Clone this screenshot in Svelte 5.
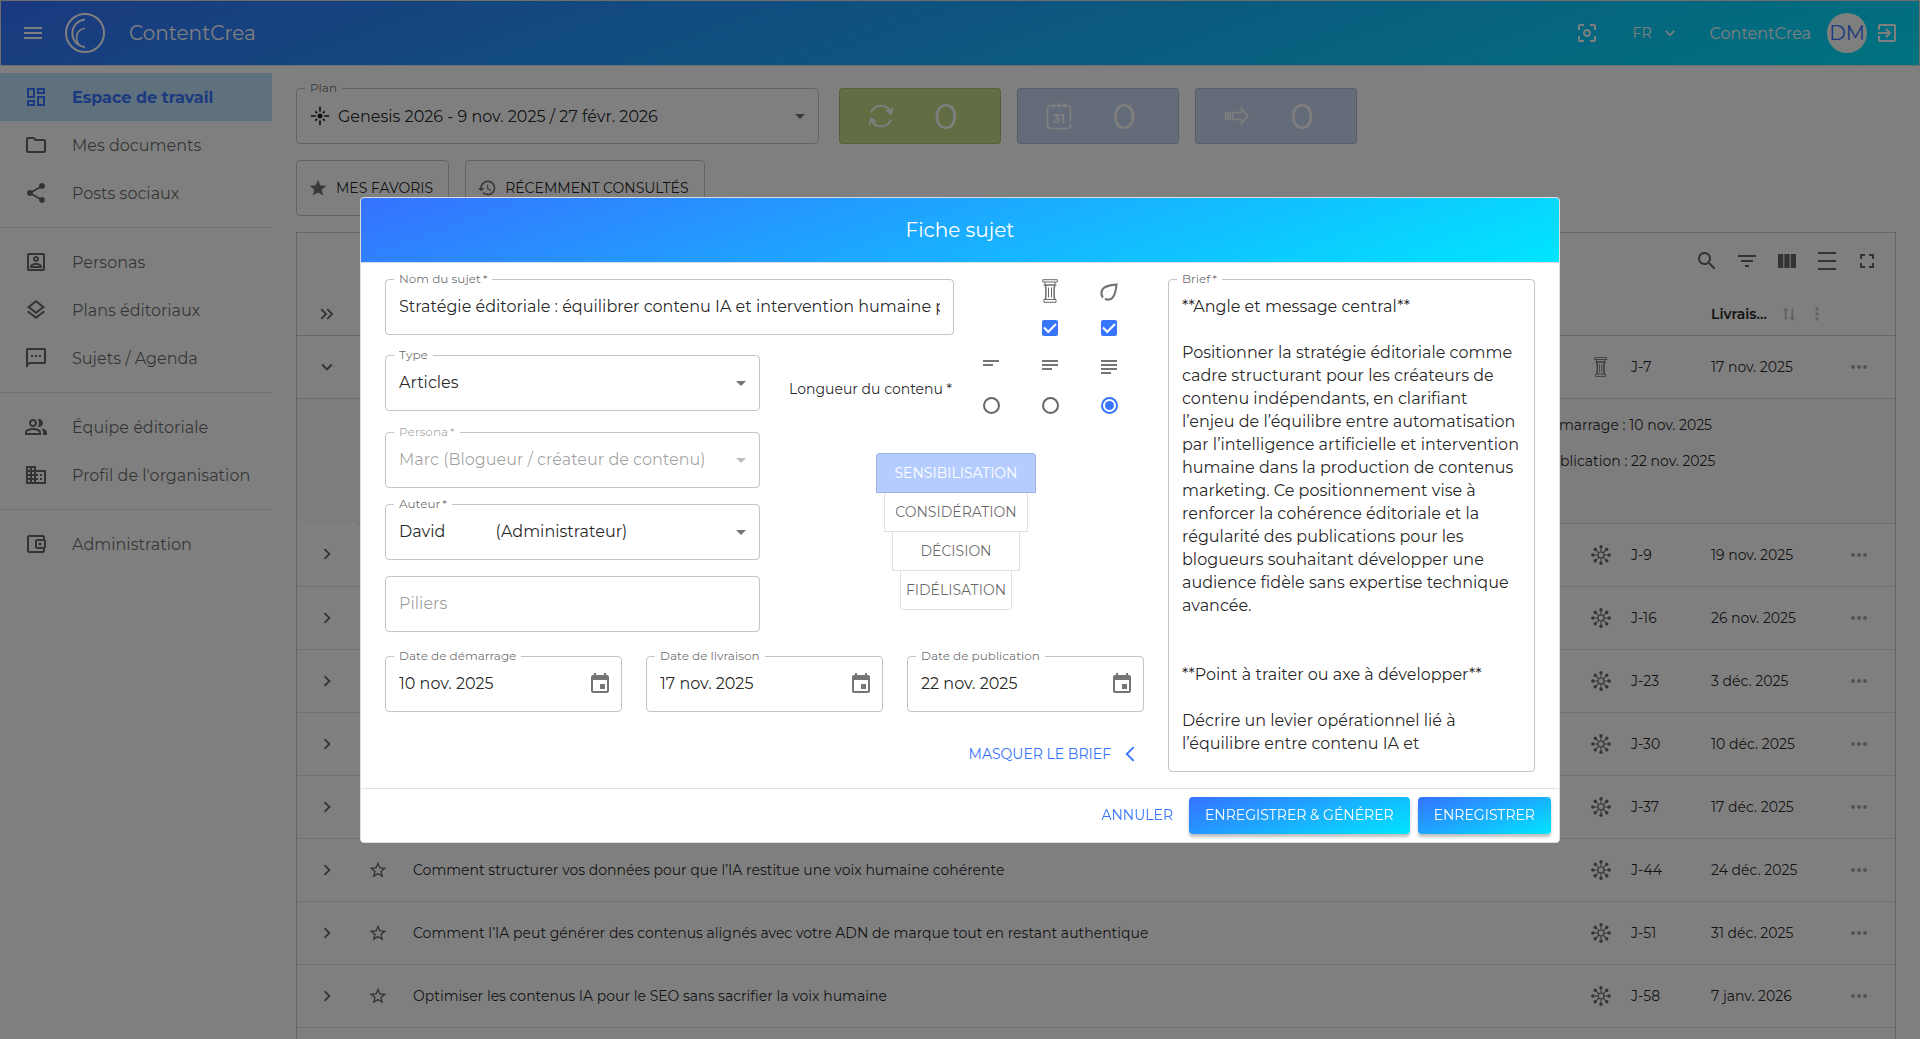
<script>
  const icons = {
    menu: "M3 18h18v-2H3v2zm0-5h18v-2H3v2zm0-7v2h18V6H3z",
    focus: "M5 15H3v4c0 1.1.9 2 2 2h4v-2H5v-4zM5 5h4V3H5c-1.1 0-2 .9-2 2v4h2V5zm14-2h-4v2h4v4h2V5c0-1.1-.9-2-2-2zm0 16h-4v2h4c1.1 0 2-.9 2-2v-4h-2v4zM12 8c-2.21 0-4 1.79-4 4s1.79 4 4 4 4-1.79 4-4-1.79-4-4-4zm0 6c-1.1 0-2-.9-2-2s.9-2 2-2 2 .9 2 2-.9 2-2 2z",
    down: "M16.59 8.59L12 13.17 7.41 8.59 6 10l6 6 6-6z",
    right: "M10 6L8.59 7.41 13.17 12l-4.58 4.59L10 18l6-6z",
    doubleRight: "M6.41 6L5 7.41 9.58 12 5 16.59 6.41 18l6-6zM13 6l-1.41 1.41L16.17 12l-4.58 4.59L13 18l6-6z",
    back: "M17.77 3.77L16 2 6 12l10 10 1.77-1.77L9.54 12z",
    dropDown: "M7 10l5 5 5-5z",
    exit: "M10.09 15.59L11.5 17l5-5-5-5-1.41 1.41L12.67 11H3v2h9.67l-2.58 2.59zM19 3H5c-1.11 0-2 .9-2 2v4h2V5h14v14H5v-4H3v4c0 1.1.89 2 2 2h14c1.1 0 2-.9 2-2V5c0-1.1-.9-2-2-2z",
    dashboard: "M19 5v2h-4V5h4M9 5v6H5V5h4m10 8v6h-4v-6h4M9 17v2H5v-2h4M21 3h-8v6h8V3zM11 3H3v10h8V3zm10 8h-8v10h8V11zm-10 4H3v6h8v-6z",
    folder: "M9.17 6l2 2H20v10H4V6h5.17M10 4H4c-1.1 0-1.99.9-1.99 2L2 18c0 1.1.9 2 2 2h16c1.1 0 2-.9 2-2V8c0-1.1-.9-2-2-2h-8l-2-2z",
    share: "M18 16.08c-.76 0-1.44.3-1.96.77L8.91 12.7c.05-.23.09-.46.09-.7s-.04-.47-.09-.7l7.05-4.11c.54.5 1.25.81 2.04.81 1.66 0 3-1.34 3-3s-1.34-3-3-3-3 1.34-3 3c0 .24.04.47.09.7L8.04 9.81C7.5 9.31 6.79 9 6 9c-1.66 0-3 1.34-3 3s1.34 3 3 3c.79 0 1.5-.31 2.04-.81l7.12 4.16c-.05.21-.08.43-.08.65 0 1.61 1.31 2.92 2.92 2.92 1.61 0 2.92-1.31 2.92-2.92s-1.31-2.92-2.92-2.92z",
    persona: "M19 5v14H5V5h14m0-2H5c-1.11 0-2 .9-2 2v14c0 1.1.89 2 2 2h14c1.1 0 2-.9 2-2V5c0-1.1-.9-2-2-2zm-7 9c-1.65 0-3-1.35-3-3s1.35-3 3-3 3 1.35 3 3-1.35 3-3 3zm0-4c-.55 0-1 .45-1 1s.45 1 1 1 1-.45 1-1-.45-1-1-1zm6 10H6v-1.53c0-2.5 3.97-3.58 6-3.58s6 1.08 6 3.58V18zm-9.69-2h7.38c-.69-.56-2.38-1.12-3.69-1.12s-3.01.56-3.69 1.12z",
    layers: "M11.99 18.54l-7.37-5.73L3 14.07l9 7 9-7-1.63-1.27-7.38 5.74zM12 16l7.36-5.73L21 9l-9-7-9 7 1.63 1.27L12 16zm0-11.47L17.74 9 12 13.47 6.26 9 12 4.53z",
    sms: "M20 2H4c-1.1 0-2 .9-2 2v18l4-4h14c1.1 0 2-.9 2-2V4c0-1.1-.9-2-2-2zm0 14H5.17L4 17.17V4h16v12zM7 9h2v2H7zm4 0h2v2h-2zm4 0h2v2h-2z",
    team: "M16.67 13.13C18.04 14.06 19 15.32 19 17v3h4v-3c0-2.18-3.57-3.47-6.33-3.87zM15 12c2.21 0 4-1.79 4-4s-1.79-4-4-4c-.47 0-.91.1-1.33.24C14.5 5.27 15 6.58 15 8s-.5 2.73-1.33 3.76c.42.14.86.24 1.33.24zM9 12c2.21 0 4-1.79 4-4s-1.79-4-4-4-4 1.79-4 4 1.79 4 4 4zm0-6c1.1 0 2 .9 2 2s-.9 2-2 2-2-.9-2-2 .9-2 2-2zm0 7c-2.67 0-8 1.34-8 4v3h16v-3c0-2.66-5.33-4-8-4zm6 5H3v-.99C3.2 16.29 6.3 15 9 15s5.8 1.29 6 2v1z",
    business: "M12 7V3H2v18h20V7H12zM6 19H4v-2h2v2zm0-4H4v-2h2v2zm0-4H4V9h2v2zm0-4H4V5h2v2zm4 12H8v-2h2v2zm0-4H8v-2h2v2zm0-4H8V9h2v2zm0-4H8V5h2v2zm10 12h-8v-2h2v-2h-2v-2h2v-2h-2V9h8v10zm-2-8h-2v2h2v-2zm0 4h-2v2h2v-2z",
    wallet: "M21 7.28V5c0-1.1-.9-2-2-2H5c-1.11 0-2 .9-2 2v14c0 1.1.89 2 2 2h14c1.1 0 2-.9 2-2v-2.28c.59-.35 1-.98 1-1.72V9c0-.74-.41-1.38-1-1.72zM20 9v6h-7V9h7zM5 19V5h14v2h-6c-1.1 0-2 .9-2 2v6c0 1.1.9 2 2 2h6v2H5zM16 10.5a1.5 1.5 0 1 0 0 3a1.5 1.5 0 1 0 0-3z",
    flare: "M7 11H1v2h6v-2zm2.17-3.24L7.05 5.64 5.64 7.05l2.12 2.12 1.41-1.41zM13 1h-2v6h2V1zm5.36 6.05l-1.41-1.41-2.12 2.12 1.41 1.41 2.12-2.12zM17 11v2h6v-2h-6zm-5-2c-1.66 0-3 1.34-3 3s1.34 3 3 3 3-1.34 3-3-1.34-3-3-3zm2.83 7.24l2.12 2.12 1.41-1.41-2.12-2.12-1.41 1.41zm-9.19.71l1.41 1.41 2.12-2.12-1.41-1.41-2.12 2.12zM11 23h2v-6h-2v6z",
    star: "M12 17.27L18.18 21l-1.64-7.03L22 9.24l-7.19-.61L12 2 9.19 8.63 2 9.24l5.46 4.73L5.82 21z",
    starBorder: "M22 9.24l-7.19-.62L12 2 9.19 8.63 2 9.24l5.46 4.73L5.82 21 12 17.27 18.18 21l-1.63-7.03L22 9.24zM12 15.4l-3.76 2.27 1-4.28-3.32-2.88 4.38-.38L12 6.1l1.71 4.04 4.38.38-3.32 2.88 1 4.28L12 15.4z",
    history: "M13 3c-4.97 0-9 4.03-9 9H1l3.89 3.89.07.14L9 12H6c0-3.87 3.13-7 7-7s7 3.13 7 7-3.13 7-7 7c-1.93 0-3.68-.79-4.94-2.06l-1.42 1.42C8.27 19.99 10.51 21 13 21c4.97 0 9-4.03 9-9s-4.03-9-9-9zm-1 5v5l4.28 2.54.72-1.21-3.5-2.08V8H12z",
    search: "M15.5 14h-.79l-.28-.27C15.41 12.59 16 11.11 16 9.5 16 5.91 13.09 3 9.5 3S3 5.91 3 9.5 5.91 16 9.5 16c1.61 0 3.09-.59 4.23-1.57l.27.28v.79l5 4.99L20.49 19l-4.99-5zm-6 0C7.01 14 5 11.99 5 9.5S7.01 5 9.5 5 14 7.01 14 9.5 11.99 14 9.5 14z",
    filter: "M10 18h4v-2h-4v2zM3 6v2h18V6H3zm3 7h12v-2H6v2z",
    columns: "M14.67 5v14H9.33V5h5.34zm1 14H21V5h-5.33v14zm-7.34 0V5H3v14h5.33z",
    density: "M3 3h18v2H3zM3 19h18v2H3zM3 11h18v2H3z",
    fullscreen: "M7 14H5v5h5v-2H7v-3zm-2-4h2V7h3V5H5v5zm12 7h-3v2h5v-5h-2v3zM14 5v2h3v3h2V5h-5z",
    more: "M6 10c-1.1 0-2 .9-2 2s.9 2 2 2 2-.9 2-2-.9-2-2-2zm12 0c-1.1 0-2 .9-2 2s.9 2 2 2 2-.9 2-2-.9-2-2-2zm-6 0c-1.1 0-2 .9-2 2s.9 2 2 2 2-.9 2-2-.9-2-2-2z",
    moreVert: "M12 8c1.1 0 2-.9 2-2s-.9-2-2-2-2 .9-2 2 .9 2 2 2zm0 2c-1.1 0-2 .9-2 2s.9 2 2 2 2-.9 2-2-.9-2-2-2zm0 6c-1.1 0-2 .9-2 2s.9 2 2 2 2-.9 2-2-.9-2-2-2z",
    sort: "M8 4L4.500 8H7V19H9V8h2.500zM15 5h2v11h2.500L16 20l-3.500-4H15z",
    event: "M17 12h-5v5h5v-5zM16 1v2H8V1H6v2H5c-1.11 0-1.99.9-1.99 2L3 19c0 1.1.89 2 2 2h14c1.1 0 2-.9 2-2V5c0-1.100-.9-2-2-2h-1V1h-2zm3 18H5V8h14v11z",
    leaf: "M6.05 8.05c-2.73 2.73-2.73 7.15-.02 9.88 1.47-3.4 4.09-6.24 7.36-7.93-2.77 2.34-4.71 5.61-5.39 9.32 2.6 1.23 5.8.78 7.95-1.37C19.43 14.47 20 4 20 4S9.53 4.57 6.05 8.05zm8.49 8.49c-.95.94-2.2 1.46-3.54 1.46-.89 0-1.73-.25-2.48-.68.92-2.88 2.62-5.41 4.88-7.32-2.63 1.36-4.84 3.46-6.37 6-1.48-1.96-1.35-4.75.44-6.54C9.21 7.72 14.04 6.65 17.8 6.2c-.45 3.76-1.52 8.59-3.26 10.34z",
    text2: "M4 5h16v2H4zM4 9h10v2H4z",
    text3: "M4 5h16v2H4zM4 9h16v2H4zM4 13h10v2H4z",
    text4: "M4 5h16v2H4zM4 9h16v2H4zM4 13h16v2H4zM4 17h10v2H4z"
  };

  const menu = [
    [
      { icon: "dashboard", label: "Espace de travail", active: true },
      { icon: "folder", label: "Mes documents" },
      { icon: "share", label: "Posts sociaux" }
    ],
    [
      { icon: "persona", label: "Personas" },
      { icon: "layers", label: "Plans éditoriaux" },
      { icon: "sms", label: "Sujets / Agenda" }
    ],
    [
      { icon: "team", label: "Équipe éditoriale" },
      { icon: "business", label: "Profil de l'organisation" }
    ],
    [{ icon: "wallet", label: "Administration" }]
  ];

  const tools = [
    { icon: "search", label: "Rechercher" },
    { icon: "filter", label: "Filtrer" },
    { icon: "columns", label: "Colonnes" },
    { icon: "density", label: "Densité" },
    { icon: "fullscreen", label: "Plein écran" }
  ];

  const rows = [
    { title: "", due: "J-9", date: "19 nov. 2025" },
    { title: "", due: "J-16", date: "26 nov. 2025" },
    { title: "", due: "J-23", date: "3 déc. 2025" },
    { title: "", due: "J-30", date: "10 déc. 2025" },
    { title: "", due: "J-37", date: "17 déc. 2025" },
    { title: "Comment structurer vos données pour que l’IA restitue une voix humaine cohérente", due: "J-44", date: "24 déc. 2025" },
    { title: "Comment l’IA peut générer des contenus alignés avec votre ADN de marque tout en restant authentique", due: "J-51", date: "31 déc. 2025" },
    { title: "Optimiser les contenus IA pour le SEO sans sacrifier la voix humaine", due: "J-58", date: "7 janv. 2026" },
    { title: "", due: "", date: "" }
  ];

  const stages = ["SENSIBILISATION", "CONSIDÉRATION", "DÉCISION", "FIDÉLISATION"];
  let stage = $state("SENSIBILISATION");

  const lengths = [
    { value: "court", icon: "text2" },
    { value: "moyen", icon: "text3" },
    { value: "long", icon: "text4" }
  ];
  let length = $state("long");

  const dates = [
    { id: "start", label: "Date de démarrage", value: "10 nov. 2025" },
    { id: "delivery", label: "Date de livraison", value: "17 nov. 2025" },
    { id: "publish", label: "Date de publication", value: "22 nov. 2025" }
  ];

  const author = "David" + "\u00a0".repeat(12) + "(Administrateur)";

  let subject = $state("Stratégie éditoriale : équilibrer contenu IA et intervention humaine pour les créateurs");
  let brief = $state(`**Angle et message central**

Positionner la stratégie éditoriale comme cadre structurant pour les créateurs de contenu indépendants, en clarifiant l’enjeu de l’équilibre entre automatisation par l’intelligence artificielle et intervention humaine dans la production de contenus marketing. Ce positionnement vise à renforcer la cohérence éditoriale et la régularité des publications pour les blogueurs souhaitant développer une audience fidèle sans expertise technique avancée.


**Point à traiter ou axe à développer**

Décrire un levier opérationnel lié à l’équilibre entre contenu IA et`);
</script>

{#snippet icon(name, size = 24)}
  <svg width={size} height={size} viewBox="0 0 24 24" fill="currentColor" aria-hidden="true">
    <path d={icons[name]} />
  </svg>
{/snippet}

{#snippet pillar(height)}
  <svg {height} viewBox="0 0 16 24" fill="none" stroke="#6b6b6b" aria-hidden="true">
    <path d="M.7.7h14.600v2.300H.7zM3 3v3h10V3M1.500 6h13M4 6v14.500M12 6v14.500M3 6.500c1.200 5 1.200 9 0 14M13 6.500c-1.200 5-1.200 9 0 14M6.500 8.500v10M9.500 8.500v10M2 20.500h12v2.800H2z" />
  </svg>
{/snippet}

{#snippet hub()}
  <svg width="20" height="20" viewBox="0 0 20 20" stroke="#6b6b6b" aria-hidden="true">
    <circle cx="10" cy="10" r="3" fill="none" stroke-width="1.200" />
    {#each [0, 45, 90, 135, 180, 225, 270, 315] as angle}
      <g transform={`rotate(${angle} 10 10)`}>
        <path d="M10 7V2" />
        <circle cx="10" cy="1.800" r="1.700" fill="#6b6b6b" stroke="none" />
      </g>
    {/each}
  </svg>
{/snippet}

<div class="app">
  <header class="topbar">
    <button class="icon-btn" aria-label="Menu">{@render icon("menu")}</button>
    <svg class="logo" width="40" height="40" viewBox="0 0 40 40" fill="none" stroke="currentColor" stroke-width="2" aria-hidden="true">
      <circle cx="20" cy="20" r="19" />
      <path d="M20 6.500a13.800 13.800 0 0 0 0 27.500" />
      <path d="M20 15.500c-5 0-8.500 4-8.500 9 0 3 1 5.500 2.500 7.500" stroke-width="1.500" />
    </svg>
    <span class="brand">ContentCrea</span>
    <button class="icon-btn focus" aria-label="Mode focus">{@render icon("focus")}</button>
    <button class="lang">FR {@render icon("down", 20)}</button>
    <span class="org">ContentCrea</span>
    <span class="avatar">DM</span>
    <button class="icon-btn" aria-label="Déconnexion">{@render icon("exit")}</button>
  </header>

  <div class="shell">
    <nav class="sidebar">
      {#each menu as group}
        <ul>
          {#each group as item}
            <li>
              <a href="#top" class:active={item.active}>{@render icon(item.icon)}{item.label}</a>
            </li>
          {/each}
        </ul>
      {/each}
    </nav>

    <main>
      <div class="plan-row">
        <div class="field plan">
          <label for="plan">Plan</label>
          {@render icon("flare", 20)}
          <select id="plan"><option>Genesis 2026 - 9 nov. 2025 / 27 févr. 2026</option></select>
          {@render icon("dropDown")}
        </div>
        <div class="stats">
          <div class="stat green">
            <svg width="26" height="26" viewBox="0 0 26 26" fill="none" stroke="currentColor" stroke-width="2" aria-hidden="true">
              <path d="M3 9.500a10.500 10.500 0 0 1 19.500-.5M23 16.500a10.500 10.500 0 0 1-19.500.5" />
              <path d="M18 7l5 4 1.500-6.500M8 18.500l-5-3-1.500 6" />
            </svg>
            <span>0</span>
          </div>
          <div class="stat">
            <svg width="26" height="28" viewBox="0 0 26 28" fill="none" stroke="currentColor" stroke-width="1.600" aria-hidden="true">
              <path d="M24.500 19V6.500a3 3 0 0 0-3-3h-17a3 3 0 0 0-3 3v17a3 3 0 0 0 3 3h17a3 3 0 0 0 3-3v-1.500M7.500 1v5M13 1v5M18.500 1v5" />
              <text x="13" y="21" text-anchor="middle">31</text>
            </svg>
            <span>0</span>
          </div>
          <div class="stat">
            <svg width="26" height="20" viewBox="0 0 26 20" fill="none" stroke="currentColor" stroke-width="1.600" aria-hidden="true">
              <path d="M1.500 6v8M3.800 6v8M6 6v8M8.500 6.500h9V2.500l6.500 7.500-6.500 7.500V13.500h-9z" />
            </svg>
            <span>0</span>
          </div>
        </div>
      </div>

      <div class="shortcuts">
        <button>{@render icon("star", 20)}MES FAVORIS</button>
        <button>{@render icon("history", 20)}RÉCEMMENT CONSULTÉS</button>
      </div>

      <section class="grid-card">
        <div class="toolbar">
          {#each tools as tool}
            <button class="icon-btn" aria-label={tool.label}>{@render icon(tool.icon)}</button>
          {/each}
        </div>
        <table>
          <colgroup>
            <col class="c-expand" /><col class="c-star" /><col /><col class="c-kind" /><col class="c-due" /><col class="c-date" /><col class="c-more" />
          </colgroup>
          <thead>
            <tr>
              <th class="mid">{@render icon("doubleRight", 22)}</th>
              <th></th>
              <th></th>
              <th></th>
              <th></th>
              <th>
                <div class="sortable">Livrais...<span>{@render icon("sort", 20)}</span><span>{@render icon("moreVert", 20)}</span></div>
              </th>
              <th></th>
            </tr>
          </thead>
          <tbody>
            <tr>
              <td class="mid">{@render icon("down", 22)}</td>
              <td class="mid">{@render icon("starBorder", 20)}</td>
              <td></td>
              <td class="mid">{@render pillar(20)}</td>
              <td>J-7</td>
              <td>17 nov. 2025</td>
              <td class="mid more">{@render icon("more")}</td>
            </tr>
            <tr class="detail">
              <td></td>
              <td colspan="6">
                <p>Date de démarrage : 10 nov. 2025</p>
                <p>Date de publication : 22 nov. 2025</p>
              </td>
            </tr>
            {#each rows as row}
              <tr>
                <td class="mid">{@render icon("right", 22)}</td>
                <td class="mid">{@render icon("starBorder", 20)}</td>
                <td>{row.title}</td>
                <td class="mid">{@render hub()}</td>
                <td>{row.due}</td>
                <td>{row.date}</td>
                <td class="mid more">{@render icon("more")}</td>
              </tr>
            {/each}
          </tbody>
        </table>
      </section>
    </main>
  </div>
</div>

<div class="backdrop">
  <div class="dialog" role="dialog" aria-modal="true" aria-labelledby="dialog-title">
    <h2 id="dialog-title">Fiche sujet</h2>

    <div class="dialog-body">
      <div class="form">
        <div class="split">
          <div class="field name">
            <label for="subject">Nom du sujet<i>*</i></label>
            <input id="subject" type="text" bind:value={subject} />
          </div>
          <div class="options">
            <span></span>
            <label for="is-pillar">{@render pillar(24)}</label>
            <label for="is-green">{@render icon("leaf", 26)}</label>
            <span></span>
            <input id="is-pillar" type="checkbox" checked aria-label="Pilier" />
            <input id="is-green" type="checkbox" checked aria-label="Evergreen" />
          </div>
        </div>

        <div class="split middle">
          <div class="stack">
            <div class="field type">
              <label for="type">Type</label>
              <select id="type"><option>Articles</option></select>
              {@render icon("dropDown")}
            </div>
            <div class="field disabled">
              <label for="persona">Persona<i>*</i></label>
              <select id="persona" disabled><option>Marc (Blogueur / créateur de contenu)</option></select>
              {@render icon("dropDown")}
            </div>
            <div class="field">
              <label for="author">Auteur<i>*</i></label>
              <select id="author"><option>{author}</option></select>
              {@render icon("dropDown")}
            </div>
            <div class="field">
              <input type="text" placeholder="Piliers" aria-label="Piliers" />
            </div>
          </div>

          <div class="side">
            <div class="length">
              <span id="length-label">Longueur du contenu *</span>
              <div class="options" role="radiogroup" aria-labelledby="length-label">
                {#each lengths as item}
                  <label for={item.value}>{@render icon(item.icon)}</label>
                {/each}
                {#each lengths as item}
                  <input id={item.value} type="radio" name="length" value={item.value} bind:group={length} aria-label={item.value} />
                {/each}
              </div>
            </div>
            <div class="funnel">
              {#each stages as name}
                <button class:selected={stage === name} onclick={() => (stage = name)}>{name}</button>
              {/each}
            </div>
          </div>
        </div>

        <div class="dates">
          {#each dates as date}
            <div class="field date">
              <label for={date.id}>{date.label}</label>
              <input id={date.id} type="text" value={date.value} />
              <button class="icon-btn" aria-label="Choisir une date">{@render icon("event")}</button>
            </div>
          {/each}
        </div>

        <button class="link toggle">MASQUER LE BRIEF {@render icon("back", 18)}</button>
      </div>

      <div class="field brief">
        <label for="brief">Brief<i>*</i></label>
        <textarea id="brief" bind:value={brief}></textarea>
      </div>
    </div>

    <footer>
      <button class="link">ANNULER</button>
      <button class="primary">ENREGISTRER &amp; GÉNÉRER</button>
      <button class="primary">ENREGISTRER</button>
    </footer>
  </div>
</div>

<style>
  :global(body) {
    font-family: Montserrat, Inter, sans-serif;
    font-size: 14px;
    color: rgba(0, 0, 0, 0.87);
    background: #fff;
  }

  .app,
  .backdrop {
    --primary: #3775ff;
    --brand: linear-gradient(160deg, #3672ff 0%, #00e5ff 100%);
    --line: rgba(0, 0, 0, 0.12);
    --grey: rgba(0, 0, 0, 0.54);
  }

  .app *,
  .backdrop * {
    box-sizing: border-box;
  }

  .app {
    height: 100vh;
    overflow: hidden;
  }

  button,
  input,
  select,
  textarea {
    margin: 0;
    padding: 0;
    border: 0;
    background: none;
    font: inherit;
    color: inherit;
    outline: none;
  }

  svg {
    display: block;
    flex: none;
  }

  .icon-btn {
    display: flex;
    align-items: center;
    justify-content: center;
  }

  /* Top bar */
  .topbar {
    display: flex;
    align-items: center;
    height: 66px;
    padding: 0 20px;
    border: 1px solid #ddd;
    background: var(--brand);
    color: #fff;
  }

  .logo {
    margin-left: 20px;
  }

  .brand {
    margin-left: 24px;
    font-size: 20px;
  }

  .focus {
    margin-left: auto;
  }

  .lang {
    display: flex;
    align-items: center;
    gap: 8px;
    margin: 0 30px 0 34px;
  }

  .org {
    font-size: 16px;
  }

  .avatar {
    display: flex;
    align-items: center;
    justify-content: center;
    width: 40px;
    height: 40px;
    margin: 0 8px 0 16px;
    border-radius: 50%;
    background: #fff;
    color: var(--primary);
    font-size: 20px;
  }

  /* Sidebar */
  .shell {
    display: flex;
    align-items: flex-start;
  }

  .sidebar {
    flex: none;
    width: 272px;
    padding-top: 7px;
    font-size: 16px;
  }

  .sidebar ul {
    margin: 0;
    padding: 0;
    list-style: none;
  }

  .sidebar ul + ul {
    margin-top: 10px;
    padding-top: 10px;
    border-top: 1px solid var(--line);
  }

  .sidebar a {
    display: flex;
    align-items: center;
    gap: 24px;
    height: 48px;
    padding-left: 24px;
    color: rgba(0, 0, 0, 0.6);
    text-decoration: none;
  }

  .sidebar a.active {
    background: #bfe2f8;
    color: var(--primary);
    font-weight: 700;
  }

  /* Workspace */
  main {
    flex: 1;
    padding: 22px 24px 0;
  }

  .field {
    position: relative;
    display: flex;
    align-items: center;
    height: 56px;
    padding: 0 6px 0 13px;
    border: 1px solid rgba(0, 0, 0, 0.23);
    border-radius: 4px;
    font-size: 16px;
  }

  .field > label {
    position: absolute;
    top: -9px;
    left: 8px;
    padding: 0 5px;
    background: #fff;
    color: rgba(0, 0, 0, 0.6);
    font-size: 12px;
    line-height: 15px;
  }

  .field i {
    margin-left: 2px;
    font-style: normal;
  }

  .field > svg {
    color: var(--grey);
  }

  .field > input,
  .field > select {
    flex: 1;
    min-width: 0;
    height: 100%;
    appearance: none;
  }

  .plan-row {
    display: flex;
    gap: 20px;
  }

  .plan {
    width: 523px;
  }

  .plan > svg:first-of-type {
    margin-right: 8px;
    color: inherit;
  }

  .stats {
    display: flex;
    gap: 16px;
  }

  .stat {
    display: flex;
    align-items: center;
    gap: 40px;
    width: 162px;
    padding-left: 28px;
    border: 1px solid var(--line);
    border-radius: 4px;
    background: #c8d8f4;
    color: #fff;
    font-size: 36px;
    line-height: 54px;
  }

  .stat.green {
    background: #c4da86;
  }

  .stat text {
    fill: currentColor;
    stroke: none;
    font-size: 12px;
    font-weight: 700;
  }

  .shortcuts {
    display: flex;
    gap: 16px;
    margin: 16px 0;
  }

  .shortcuts button {
    display: flex;
    align-items: center;
    gap: 8px;
    height: 56px;
    padding: 0 15px 0 11px;
    border: 1px solid rgba(0, 0, 0, 0.23);
    border-radius: 4px;
  }

  .shortcuts svg {
    color: var(--grey);
  }

  .grid-card {
    border: 1px solid rgba(0, 0, 0, 0.2);
  }

  .toolbar {
    display: flex;
    justify-content: flex-end;
    padding: 8px;
    color: rgba(0, 0, 0, 0.6);
  }

  .toolbar .icon-btn {
    width: 40px;
    height: 40px;
  }

  table {
    width: 100%;
    border-collapse: collapse;
    table-layout: fixed;
  }

  .c-expand {
    width: 60px;
  }

  .c-star {
    width: 41px;
  }

  .c-kind {
    width: 60px;
  }

  .c-due {
    width: 80px;
  }

  .c-date {
    width: 111px;
  }

  .c-more {
    width: 73px;
  }

  th {
    height: 46px;
    padding: 4px 0 0;
    border-bottom: 1px solid rgba(0, 0, 0, 0.2);
    text-align: left;
    font-weight: 600;
  }

  .sortable {
    display: flex;
    align-items: center;
    gap: 8px;
    white-space: nowrap;
  }

  .sortable span {
    color: rgba(0, 0, 0, 0.24);
  }

  .sortable span:first-of-type {
    margin-left: 4px;
  }

  td {
    height: 63px;
    padding: 0;
    border-bottom: 1px solid var(--line);
    white-space: nowrap;
  }

  td:nth-child(3) {
    padding-left: 15px;
  }

  .mid svg {
    margin: 0 auto;
    color: rgba(0, 0, 0, 0.6);
  }

  .more svg {
    color: rgba(0, 0, 0, 0.35);
  }

  .detail td {
    height: 125px;
    padding: 0 0 23px 1125px;
    background: #fafafa;
  }

  .detail td:first-child {
    padding: 0;
    border: 0;
  }

  .detail p {
    margin: 0 0 12px;
    line-height: 24px;
  }

  /* Dialog */
  .backdrop {
    position: fixed;
    inset: 0;
    display: grid;
    place-items: center;
    background: rgba(0, 0, 0, 0.5);
  }

  .dialog {
    width: 1200px;
    max-width: 100%;
    border: 1px solid #ddd;
    border-radius: 4px;
    background: #fff;
    overflow: hidden;
  }

  h2 {
    margin: 0;
    border-bottom: 1px solid #ddd;
    background: var(--brand);
    color: #fff;
    font-size: 20px;
    font-weight: 400;
    line-height: 64px;
    text-align: center;
  }

  .dialog-body {
    display: grid;
    grid-template-columns: minmax(0, 759fr) minmax(0, 367fr);
    gap: 24px;
    padding: 16px 24px;
  }

  .split {
    display: flex;
  }

  .name {
    flex: 1;
    padding-right: 13px;
  }

  .options {
    display: grid;
    grid-template-columns: repeat(3, 59px);
    justify-content: center;
    justify-items: center;
    width: 190px;
    padding-left: 2px;
  }

  .options input {
    display: grid;
    place-items: center;
    appearance: none;
    width: 16px;
    height: 16px;
    margin-top: 17px;
  }

  .options input[type="checkbox"] {
    border-radius: 2px;
    background: var(--primary);
  }

  .options input[type="checkbox"]::before {
    content: "";
    width: 10px;
    height: 5px;
    margin-bottom: 3px;
    border: solid #fff;
    border-width: 0 0 2px 2px;
    transform: rotate(-45deg);
  }

  .options input[type="radio"] {
    width: 17px;
    height: 17px;
    margin-top: 18px;
    border: 2px solid rgba(0, 0, 0, 0.6);
    border-radius: 50%;
  }

  .options input[type="radio"]:checked {
    border-color: var(--primary);
  }

  .options input[type="radio"]:checked::before {
    content: "";
    width: 9px;
    height: 9px;
    border-radius: 50%;
    background: var(--primary);
  }

  .options label {
    height: 24px;
    color: var(--grey);
  }

  .middle {
    gap: 8px;
    margin-top: 19px;
  }

  .stack {
    display: flex;
    flex-direction: column;
    gap: 16px;
    width: 375px;
  }

  .type {
    margin-bottom: 5px;
  }

  .disabled > label,
  .disabled > select {
    color: rgba(0, 0, 0, 0.38);
    opacity: 1;
  }

  .disabled > svg {
    color: rgba(0, 0, 0, 0.26);
  }

  ::placeholder {
    color: rgba(0, 0, 0, 0.4);
    opacity: 1;
  }

  .side {
    flex: 1;
  }

  .length {
    display: flex;
    align-items: center;
    justify-content: flex-end;
  }

  #length-label {
    padding: 9px 2px 0 0;
  }

  .funnel {
    display: flex;
    flex-direction: column;
    align-items: center;
    margin-top: 39px;
  }

  .funnel button {
    width: 160px;
    height: 39px;
    border: 1px solid var(--line);
    border-top: 0;
    color: rgba(0, 0, 0, 0.6);
  }

  .funnel button:nth-child(1) {
    height: 40px;
    border-top: 1px solid var(--line);
    border-radius: 4px 4px 0 0;
  }

  .funnel button:nth-child(2) {
    width: 144px;
  }

  .funnel button:nth-child(3) {
    width: 128px;
  }

  .funnel button:nth-child(4) {
    width: 112px;
    border-radius: 0 0 4px 4px;
  }

  .funnel button.selected {
    background: #b5ccff;
    color: #fff;
  }

  .dates {
    display: grid;
    grid-template-columns: repeat(3, minmax(0, 1fr));
    gap: 24px;
    margin-top: 24px;
  }

  .date {
    padding-right: 9px;
  }

  .date .icon-btn {
    color: var(--grey);
  }

  .link {
    color: var(--primary);
  }

  .toggle {
    display: flex;
    align-items: center;
    gap: 10px;
    height: 36px;
    margin: 24px 5px 0 auto;
  }

  .brief {
    height: auto;
    padding: 15px 13px 17px;
  }

  .brief textarea {
    width: 100%;
    height: 458px;
    line-height: 23px;
    resize: none;
    overflow: hidden;
  }

  footer {
    display: flex;
    justify-content: flex-end;
    gap: 8px;
    padding: 8px;
    border-top: 1px solid var(--line);
  }

  footer button {
    height: 37px;
    padding: 0 8px;
  }

  footer .primary {
    padding: 0 16px;
    border-radius: 4px;
    background: var(--brand);
    color: #fff;
    box-shadow: 0 3px 3px rgba(0, 0, 0, 0.25);
  }
</style>
